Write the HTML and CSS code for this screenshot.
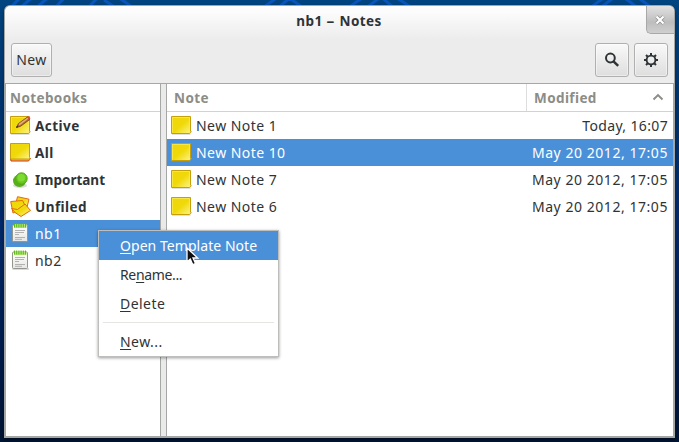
FILE: index.html
```html
<!DOCTYPE html>
<html lang="en">
<head>
<meta charset="utf-8">
<title>nb1 – Notes</title>
<link rel="stylesheet" href="styles.css">
</head>
<body>
<svg width="0" height="0" class="defs">
  <defs>
    <linearGradient id="yellow" x1="0" y1="0" x2="1" y2="1"><stop offset="0" stop-color="#eed60c"/><stop offset=".5" stop-color="#f0d908"/><stop offset="1" stop-color="#fdf58e"/></linearGradient>
    <linearGradient id="paper" x1="0" y1="0" x2="0" y2="1"><stop offset="0" stop-color="#fff"/><stop offset="1" stop-color="#e6e6e4"/></linearGradient>
    <symbol id="note" viewBox="0 0 22 20">
      <path d="M1 18h18.500" stroke="#999" stroke-opacity=".6"/>
      <path d="M.5 .5h19v14.500l.8 1-2 1.500H.5v-17z" fill="url(#yellow)" stroke="#c5a00c"/>
      <path d="M1.500 16.500v-15h17v13" fill="none" stroke="#fbed5a" stroke-opacity=".7"/>
    </symbol>
    <symbol id="notebook" viewBox="0 0 18 20">
      <path d="M.5 19h16.500" stroke="#888" stroke-opacity=".6"/>
      <rect x=".5" y="2" width="15" height="16.500" rx="1" fill="url(#paper)" stroke="#93958f"/>
      <path d="M2 1h12.500v4H2z" fill="#b6e977"/>
      <path d="M2.500 .5v4M4.700.5v4M6.900.5v4M9.100.5v4M11.300.5v4M13.500 .5v4" stroke="#5fb81e" stroke-width="1.100"/>
      <path d="M3 7.500h10M3 9.500h9M3 11.500h4M3 14.500h10M3 16.300h7" stroke="#aaa" stroke-width=".9"/>
    </symbol>
  </defs>
</svg>
<div class="desktop">
<svg class="wallpaper" viewBox="0 0 679 442"><g fill="none" stroke="#0b60d8" stroke-opacity=".65" stroke-width="3"><path d="M10 8l12-12M20 8L34-4M36 8L50-4M55 8L66-4M88 8L99-4M104 0l12 8M118-3l14 10M264 7l14-10M278 8l14-12M288-3l14 10M348 8l14-10M366 8l16-12M380-4l14 12M394-4l18 12M590 8l16-12M600 8l16-12M622-4l16 12M636-4l16 12"/></g></svg>
<main class="window">
  <header class="titlebar">
    <h1>nb1 <span class="dash">–</span> Notes</h1>
    <button class="close" aria-label="Close"><svg width="10" height="10" viewBox="0 0 10 10"><path d="M1.500 1.500l7 7M8.500 1.500l-7 7" stroke="#8f8f8f" stroke-width="3.600"/><path d="M1.500 1.500l7 7M8.500 1.500l-7 7" stroke="#fff" stroke-width="2.200"/></svg></button>
  </header>
  <div class="toolbar">
    <button class="tool new">New</button>
    <button class="tool icon push" aria-label="Search"><svg width="16" height="16" viewBox="0 0 16 16"><circle cx="6.400" cy="6" r="4.400" fill="none" stroke="#2e3436" stroke-width="2"/><path d="M9.500 9.300l4.700 4.500" stroke="#2e3436" stroke-width="2.500"/></svg></button>
    <button class="tool icon" aria-label="Settings"><svg width="16" height="16" viewBox="0 0 16 16"><circle cx="8" cy="8" r="4.400" fill="none" stroke="#2e3436" stroke-width="1.900"/><path d="M8 1v3M8 12v3M1 8h3M12 8h3M3 3l2 2M11 11l2 2M13 3l-2 2M5 11l-2 2" stroke="#2e3436" stroke-width="2"/></svg></button>
  </div>
  <div class="panes">
    <section class="pane sidebar">
      <div class="heading"><span class="h-books">Notebooks</span></div>
      <ul>
        <li class="bold"><svg class="ic" width="22" height="20"><use href="#note"/><path d="M6.500 11.500l2-4 9-6.500 2.500 2.300-9.500 7z" fill="#b36a38" stroke="#6e3a16" stroke-width=".8"/><path d="M8.500 8l9-6.500 1 1-9 7z" fill="#e6ae78"/><path d="M17 1.300l1.500-1 2 2-1.300 1.500z" fill="#d94b40"/><path d="M6 11.800l1-2 1.300 1.200z" fill="#222"/></svg><span class="t-active">Active</span></li>
        <li class="bold"><svg class="ic" width="22" height="20"><path d="M.5 15.500h20l-2 2.500H1z" fill="#f3b65a" stroke="#c83b0a"/><path d="M.5.500h19v14l.5 1.500H.5z" fill="url(#yellow)" stroke="#c5a00c"/></svg><span class="t-all">All</span></li>
        <li class="bold"><svg class="ic" width="22" height="20"><ellipse cx="10" cy="15.500" rx="7" ry="2.500" fill="#999" opacity=".35"/><ellipse cx="9.500" cy="10.800" rx="6.500" ry="6.200" fill="#59ae1c"/><circle cx="11.500" cy="8.500" r="5.700" fill="#67c81c" stroke="#55a51b"/><circle cx="11.300" cy="7.800" r="3.700" fill="#7edb32"/></svg><span class="t-imp">Important</span></li>
        <li class="bold"><svg class="ic tall" width="22" height="21" viewBox="0 0 22 21"><g fill="url(#yellow)" stroke="#e06a12" stroke-linejoin="round"><path d="M7.500.7l11.500 2.500-2 8L5.500 9z"/><path d="M.7 5.500L12.500 4.500l3.500 7L3 17z"/><path d="M1.500 12.500l6 1L15 8l5.500 6.500-9.500 6-6-4z"/></g></svg><span class="t-unf">Unfiled</span></li>
        <li class="selected"><svg class="ic" width="18" height="20"><use href="#notebook"/></svg><span>nb1</span></li>
        <li><svg class="ic" width="18" height="20"><use href="#notebook"/></svg><span>nb2</span></li>
      </ul>
    </section>
    <section class="pane notes">
      <div class="heading"><span class="h-note">Note</span><span class="h-mod">Modified</span><svg class="sort" width="12" height="8" viewBox="0 0 12 8"><path d="M1.500 6.500L6 2l4.500 4.500" fill="none" stroke="#8b8d86" stroke-width="1.900"/></svg></div>
      <ul>
        <li><svg class="ic" width="22" height="20"><use href="#note"/></svg><span>New Note 1</span><time class="today">Today, 16:07</time></li>
        <li class="selected"><svg class="ic" width="22" height="20"><use href="#note"/></svg><span>New Note 10</span><time>May 20 2012, 17:05</time></li>
        <li><svg class="ic" width="22" height="20"><use href="#note"/></svg><span>New Note 7</span><time>May 20 2012, 17:05</time></li>
        <li><svg class="ic" width="22" height="20"><use href="#note"/></svg><span>New Note 6</span><time>May 20 2012, 17:05</time></li>
      </ul>
    </section>
  </div>
</main>
<nav class="menu">
  <div class="item active"><span class="m-open"><u>O</u>pen Template Note</span></div>
  <div class="item"><span class="m-rename">Re<u>n</u>ame...</span></div>
  <div class="item"><span><u>D</u>elete</span></div>
  <hr>
  <div class="item"><span><u>N</u>ew...</span></div>
</nav>
<svg class="cursor" width="15" height="22" viewBox="0 0 15 22"><path d="M2 2v14l3.300-3 2.500 5.700 2.700-1.200L8 12h4.700z" fill="#111" stroke="#fff" stroke-width="1.300"/></svg>
</div>
</body>
</html>
```
FILE: styles.css
```css
* { box-sizing: border-box; }
body { margin: 0; font: 14px/20px "Noto Sans", sans-serif; color: #2e3436; letter-spacing: .45px; }
.defs { position: absolute; }
.desktop {
  position: relative; width: 679px; height: 442px; padding: 5px 4px 4px; overflow: hidden;
  background: linear-gradient(180deg, #004581 0, #00356f 25%, #032a6d 50%, #001c4d 80%, #001535 100%);
}
.wallpaper { position: absolute; inset: 0; }
.window {
  position: relative; display: flex; flex-direction: column; width: 671px; height: 433px;
  border: 1px solid #a4a6a4; border-width: 1px 1px 2px; border-radius: 6px 6px 0 0;
  background: linear-gradient(#fff 0, #ececec 34px); overflow: hidden;
  box-shadow: 0 2px 4px #0006;
}
.titlebar { display: flex; justify-content: center; height: 34px; position: relative; }
h1 { margin: 5px 1px 0 0; font-size: 13.5px; line-height: 20px; font-weight: 700; letter-spacing: .4px; }
.dash { display: inline-block; transform: scaleX(1.15); margin: 0 1px; }
button { font: inherit; color: inherit; letter-spacing: inherit; padding: 0; display: flex; align-items: center; justify-content: center; }
.close { position: absolute; right: 0; top: 0; width: 28px; height: 28px; border: 1px solid #a8a8a8; border-width: 0 0 1px 1px; border-radius: 0 0 0 5px; background: linear-gradient(#e2e2e2, #bdbdbd 60%, #cfcfcf); }
.close svg { margin: 1px 1px 0 0; }
.toolbar { display: flex; gap: 5px; height: 43px; padding: 3px 6px 0; }
.tool { height: 34px; border: 1px solid #b0b1ae; border-radius: 3px; background: linear-gradient(#f9f9f9, #dedede); box-shadow: inset 0 0 0 1px #ffffff70; }
.new { width: 41px; }
.icon { width: 34px; }
.push { margin-left: auto; }
.panes { flex: 1; display: flex; gap: 5px; background: #ebeaea; border-top: 1px solid #a5a8a5; }
.pane { background: #fff; }
.sidebar { width: 156px; border-right: 1px solid #a5a8a5; border-left: 1px solid #a5a8a5; }
.notes { flex: 1; border-left: 1px solid #a5a8a5; border-right: 1px solid #a5a8a5; }
.heading { display: flex; height: 28px; border-bottom: 1px solid #d2d3d1; color: #8b8d86; font-weight: 700; font-size: 13.5px; line-height: 29px; letter-spacing: .4px; }
.h-books { padding-left: 4px; }
.h-note { width: 360px; padding-left: 7px; border-right: 1px solid #ddd; }
.h-mod { padding-left: 7px; }
.sort { margin: 9px 9px 0 auto; }
ul { margin: 0; padding: 0; list-style: none; }
li { display: flex; height: 27px; line-height: 28px; padding: 0 5px 0 4px; white-space: nowrap; }
.ic { flex: none; margin: 4px 3px 0 0; }
.ic.tall { margin-top: 3px; }
.sidebar li:not(.bold) .ic { margin: 3px 5px 0 2px; }
.bold { font-weight: 700; font-size: 13.5px; line-height: 29px; }
.t-imp { letter-spacing: 0; }
.selected, .active { color: #fff; background: #4a90d9; }
time { margin-left: auto; letter-spacing: .55px; }
.today { letter-spacing: .35px; }
.menu { position: absolute; left: 98px; top: 230px; width: 181px; height: 127px; border: 1px solid #bdbdbb; background: #fff; box-shadow: 0 1px 3px #0006; }
.item { height: 29px; padding-left: 21px; line-height: 30px; white-space: nowrap; }
.m-open { letter-spacing: .05px; }
.m-rename { letter-spacing: -.35px; }
.menu hr { height: 1px; margin: 4px; border: 0; background: #e5e5e3; }
u { text-decoration: underline; text-underline-offset: 2px; text-decoration-thickness: 1px; }
.cursor { position: absolute; left: 185px; top: 246px; }
```
